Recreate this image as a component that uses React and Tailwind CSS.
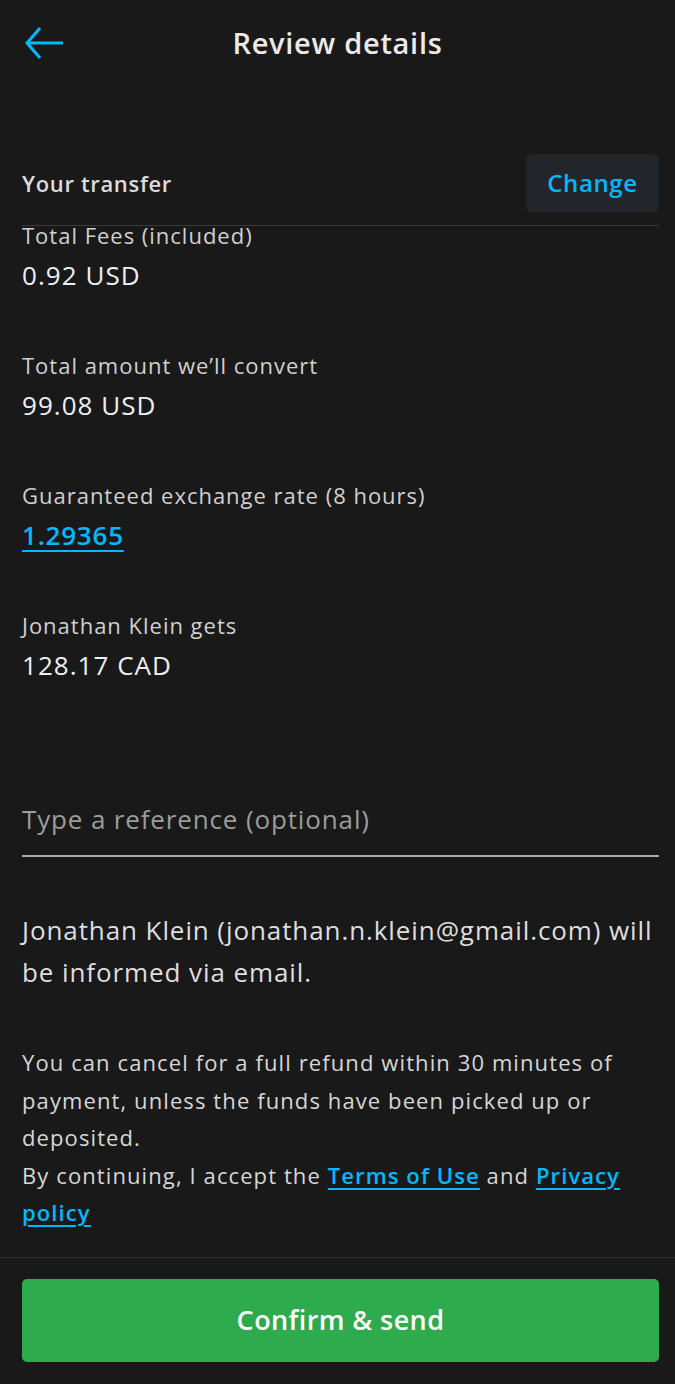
import React from "react";

const BLUE = "text-[#00b9ff]";

const rows = [
  { label: "Total Fees (included)", value: "0.92 USD" },
  { label: "Total amount we’ll convert", value: "99.08 USD" },
  { label: "Guaranteed exchange rate (8 hours)", value: "1.29365", link: true },
  { label: "Jonathan Klein gets", value: "128.17 CAD" },
];

const App = () => {
  return (
    <div className="min-h-[1384px] w-full bg-[#191919] text-[#e8e8e8] flex flex-col" style={{ fontFamily: "'Open Sans', 'Noto Sans', sans-serif" }}>
      {/* Header */}
      <header className="relative flex items-center justify-center h-[86px]">
        <button className={`absolute left-[24px] top-[26px] ${BLUE}`}>
          <svg width="40" height="34" viewBox="0 0 40 34" fill="none" stroke="currentColor" strokeWidth="3">
            <path d="M39 17H4" />
            <path d="M16 2L3 17l13 15" />
          </svg>
        </button>
        <h1 className="text-[29px] font-semibold tracking-[0.025em] text-[#ebebeb]">Review details</h1>
      </header>

      <main className="flex-1 pl-[22px] pr-[16px] pt-[68px]">
        <div className="flex items-center justify-between pb-[13px] border-b border-[#3a3a3a]">
          <span className="text-[22px] font-semibold tracking-[0.03em] text-[#dcdcdc]">Your transfer</span>
          <button className={`h-[58px] w-[133px] rounded-md bg-[#22262a] text-[24px] font-semibold tracking-[0.025em] ${BLUE}`}>
            Change
          </button>
        </div>

        <div className="flex flex-col">
          {rows.map((r, i) => (
            <div key={r.label} className={`flex flex-col ${i === 0 ? "-mt-[2px]" : "pt-[68px]"}`}>
              <span className="text-[22px] leading-[22px] tracking-[0.045em] text-[#d0d0d0]">{r.label}</span>
              <span
                className={`mt-[18px] text-[26px] leading-[22px] ${
                  r.link
                    ? `${BLUE} font-semibold tracking-[0.03em] underline underline-offset-[5px] decoration-2`
                    : "tracking-[0.04em] text-[#efefef]"
                }`}
              >
                {r.value}
              </span>
            </div>
          ))}
        </div>

        <div className="mt-[124px] pb-[16px] border-b-2 border-[#a8a8a8]">
          <span className="text-[26px] tracking-[0.033em] text-[#9c9c9c]">Type a reference (optional)</span>
        </div>

        <p className="mt-[52px] text-[26px] leading-[42px] tracking-[0.035em] text-[#dedede]">
          Jonathan Klein (jonathan.n.klein@gmail.com) will be informed via email.
        </p>

        <p className="mt-[51px] text-[22px] leading-[37.5px] tracking-[0.05em] text-[#d6d6d6]">
          You can cancel for a full refund within 30 minutes of payment, unless the funds have been picked up or deposited.
          <br />
          By continuing, I accept the{" "}
          <a className={`${BLUE} font-semibold underline underline-offset-4 decoration-2`}>Terms of Use</a> and{" "}
          <a className={`${BLUE} font-semibold underline underline-offset-4 decoration-2`}>Privacy policy</a>
        </p>
      </main>

      <footer className="border-t border-[#2f2f2f] pl-[22px] pr-[16px] pt-[21px] pb-[22px]">
        <button className="w-full h-[83px] rounded-[5px] bg-[#2dab4d] text-white text-[27px] font-semibold tracking-[0.015em]">
          Confirm &amp; send
        </button>
      </footer>
    </div>
  );
};

export default App;
